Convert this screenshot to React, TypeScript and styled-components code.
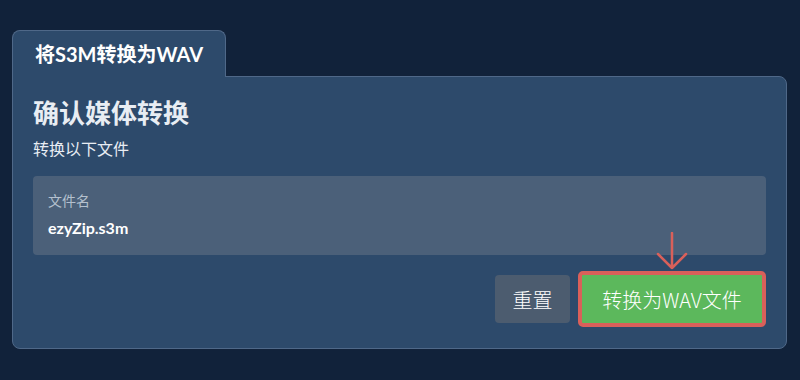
import React from 'react';
import styled, { createGlobalStyle } from 'styled-components';

const GlobalStyle = createGlobalStyle`
  html, body {
    margin: 0;
    padding: 0;
    background: #11223a;
    font-family: Lato, "Noto Sans CJK SC", sans-serif;
  }
`;

const Page = styled.div`
  width: 800px;
  height: 380px;
  box-sizing: border-box;
  padding: 30px 13px 0 12px;
`;

const Tabs = styled.div`
  display: flex;
`;

const Tab = styled.div`
  height: 47px;
  box-sizing: border-box;
  padding: 0 22px 2px 22px;
  display: flex;
  align-items: center;
  background: #2d4a6b;
  border: 1px solid #4f6888;
  border-bottom: none;
  border-radius: 8px 8px 0 0;
  color: #ffffff;
  font-size: 20px;
  font-weight: 700;
  margin-bottom: -1px;
  position: relative;
  z-index: 1;
`;

const Card = styled.div`
  background: #2d4a6b;
  border: 1px solid #4f6888;
  border-radius: 0 8px 8px 8px;
  padding: 20px 20px 21px 20px;
  display: flex;
  flex-direction: column;
`;

const Title = styled.h2`
  margin: 0;
  font-size: 26px;
  line-height: 32px;
  font-weight: 700;
  color: #e8edf3;
`;

const Subtitle = styled.p`
  margin: 8px 0 0;
  font-size: 16px;
  line-height: 24px;
  color: #e8edf3;
`;

const FileBox = styled.div`
  margin-top: 15px;
  background: #4b6079;
  border-radius: 4px;
  padding: 15px 15px 16px;
  display: flex;
  flex-direction: column;
  gap: 6px;
`;

const FileLabel = styled.span`
  font-size: 14px;
  line-height: 20px;
  color: #b4c0ce;
`;

const FileName = styled.span`
  font-size: 16px;
  line-height: 22px;
  font-weight: 700;
  color: #ffffff;
`;

const Actions = styled.div`
  margin-top: 16px;
  display: flex;
  justify-content: flex-end;
  align-items: center;
  gap: 8px;
`;

const ResetButton = styled.button`
  height: 48px;
  width: 75px;
  padding: 0;
  border: none;
  border-radius: 4px;
  background: #4c5c6f;
  color: #ffffff;
  font-family: "Noto Sans CJK SC", sans-serif;
  font-size: 20px;
  font-weight: 300;
`;

const ConvertWrap = styled.div`
  position: relative;
`;

const ConvertButton = styled.button`
  height: 56px;
  width: 188px;
  box-sizing: border-box;
  border: 4px solid #d9605a;
  border-radius: 5px;
  background: #5cb85c;
  color: #ffffff;
  font-family: "Noto Sans CJK SC", sans-serif;
  font-size: 20px;
  font-weight: 300;
  padding: 0;
`;

const Arrow = styled.svg`
  position: absolute;
  left: 78px;
  top: -39px;
`;

export default function App() {
  return (
    <>
      <GlobalStyle />
      <Page>
        <Tabs>
          <Tab>将S3M转换为WAV</Tab>
        </Tabs>
        <Card>
          <Title>确认媒体转换</Title>
          <Subtitle>转换以下文件</Subtitle>
          <FileBox>
            <FileLabel>文件名</FileLabel>
            <FileName>ezyZip.s3m</FileName>
          </FileBox>
          <Actions>
            <ResetButton>重置</ResetButton>
            <ConvertWrap>
              <Arrow width="32" height="38" viewBox="0 0 32 38">
                <path
                  d="M16 1 L16 36 M2 22 L16 36 L30 22"
                  fill="none"
                  stroke="#d9605a"
                  strokeWidth="2.5"
                  strokeLinecap="round"
                  strokeLinejoin="round"
                />
              </Arrow>
              <ConvertButton>转换为WAV文件</ConvertButton>
            </ConvertWrap>
          </Actions>
        </Card>
      </Page>
    </>
  );
}
